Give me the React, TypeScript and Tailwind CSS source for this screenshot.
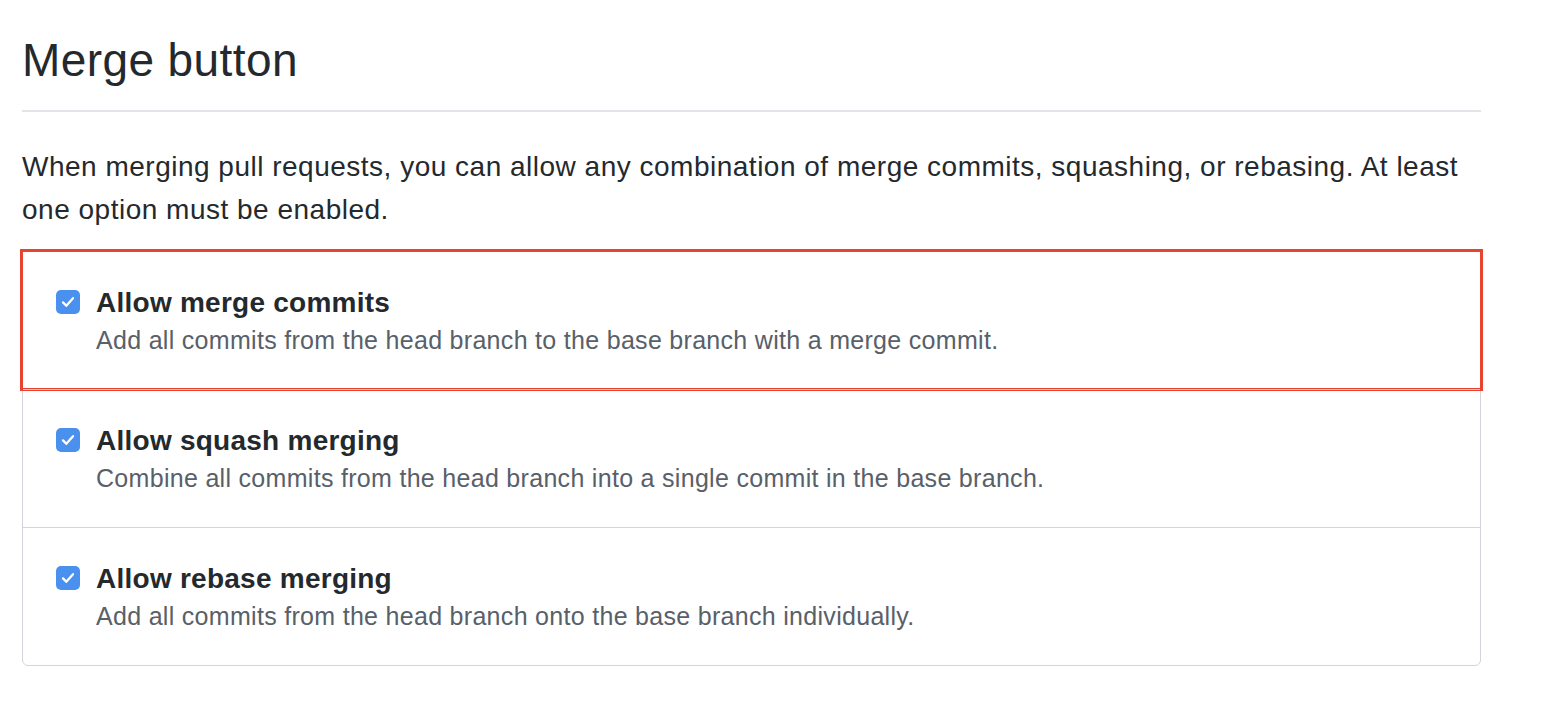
import React from 'react';

interface MergeOption {
  title: string;
  description: string;
  highlighted?: boolean;
}

const OPTIONS: MergeOption[] = [
  {
    title: 'Allow merge commits',
    description: 'Add all commits from the head branch to the base branch with a merge commit.',
    highlighted: true,
  },
  {
    title: 'Allow squash merging',
    description: 'Combine all commits from the head branch into a single commit in the base branch.',
  },
  {
    title: 'Allow rebase merging',
    description: 'Add all commits from the head branch onto the base branch individually.',
  },
];

const CheckBox = () => (
  <div className="w-6 h-6 rounded-[5px] bg-[#4a90ee] flex items-center justify-center shrink-0">
    <svg width="18" height="18" viewBox="0 0 18 18" fill="none">
      <path d="M4 9.4l3.3 3.4L14 5.2" stroke="white" strokeWidth="2.3" strokeLinecap="round" strokeLinejoin="round" />
    </svg>
  </div>
);

export default function App() {
  return (
    <div className="min-h-screen bg-white pl-[22px] font-['Liberation_Sans',Arial,sans-serif] text-[#24292e]">
      <div className="w-[1459px]">
        {/* Subhead */}
        <div className="pt-[32px] pb-[20px] border-b-2 border-[#e1e4e8]">
          <h2 className="text-[46px] leading-[1.25] font-normal tracking-[0.4px]">Merge button</h2>
        </div>

        <p className="mt-[33px] text-[28px] leading-[43px] tracking-[0.5px]">
          When merging pull requests, you can allow any combination of merge commits, squashing, or rebasing. At least one option must be enabled.
        </p>

        {/* Options box */}
        <div className="mt-[20px] border border-[#d1d5da] rounded-b-md">
          {OPTIONS.map((opt, i) => (
            <div
              key={opt.title}
              className={`relative flex gap-4 pl-[33px] pt-[38px] pb-[32px] ${i > 0 ? 'border-t border-[#d1d5da]' : ''}`}
            >
              <CheckBox />
              <div className="-mt-[4px]">
                <div className="text-[28px] leading-[34px] font-bold tracking-[0.25px] text-[#24292e]">{opt.title}</div>
                <div className="mt-[3px] text-[25px] leading-[34px] tracking-[0.3px] text-[#586069]">{opt.description}</div>
              </div>
              {opt.highlighted && (
                <div className="absolute -left-[3px] -top-[3px] -right-[3px] -bottom-[2px] border-[3px] border-[#e8432e] pointer-events-none" />
              )}
            </div>
          ))}
        </div>
      </div>
    </div>
  );
}
